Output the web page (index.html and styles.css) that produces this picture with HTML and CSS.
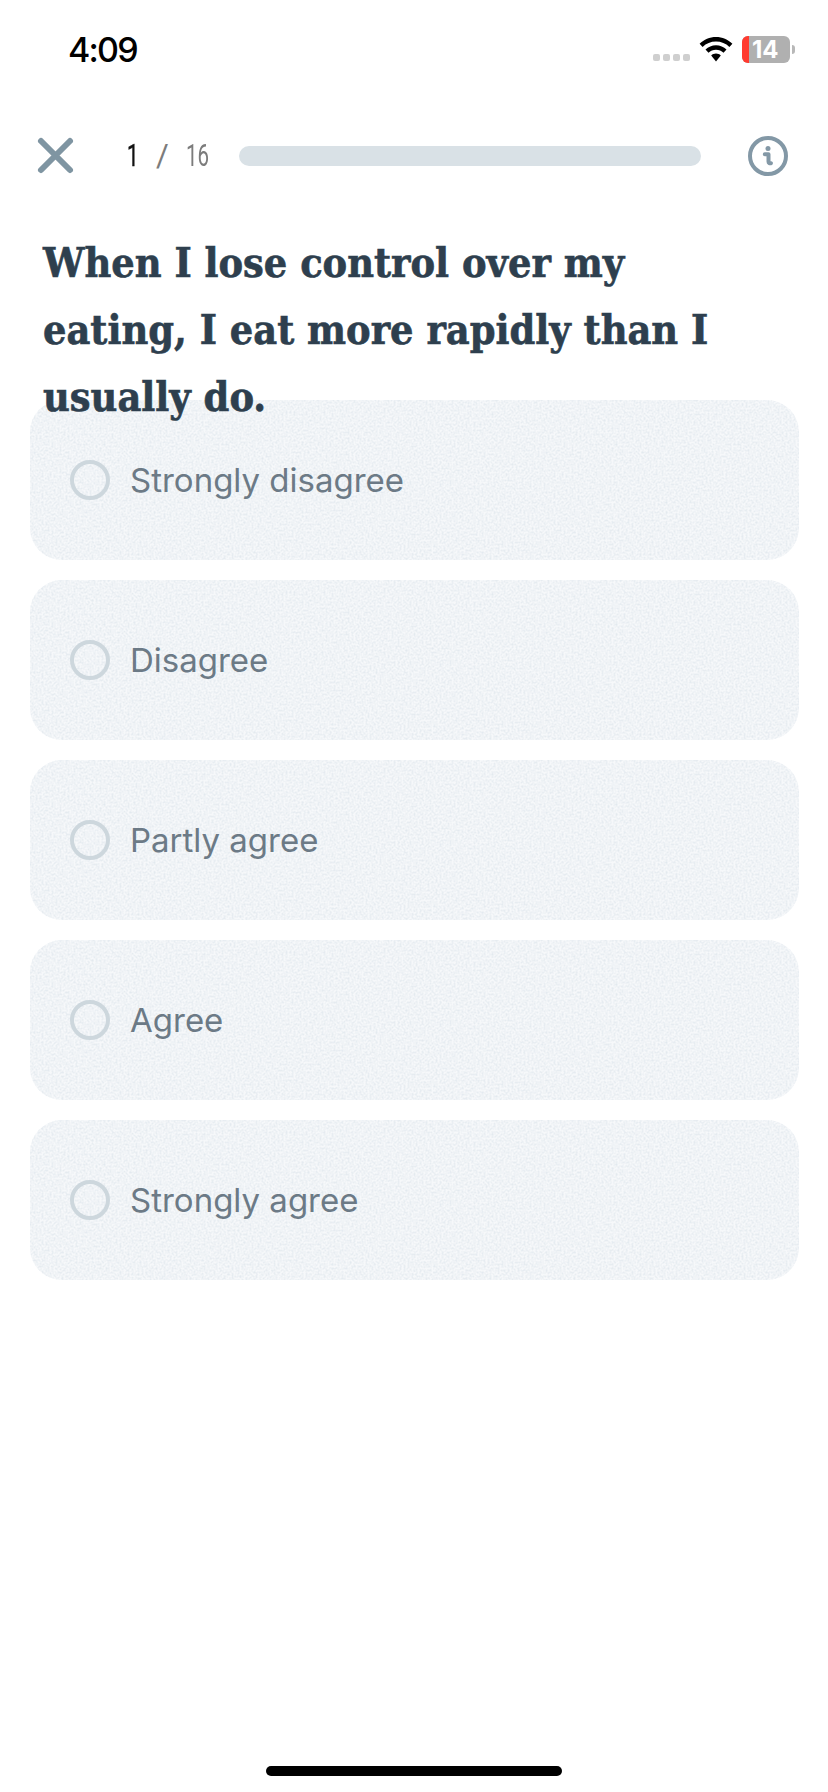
FILE: index.html
```html
<!DOCTYPE html>
<html lang="en">
<head>
<meta charset="utf-8">
<title>Question 1 of 16</title>
<link rel="stylesheet" href="styles.css">
</head>
<body>
<svg class="defs" width="0" height="0" aria-hidden="true">
  <filter id="grain" x="0" y="0" width="100%" height="100%" color-interpolation-filters="sRGB">
    <feTurbulence type="fractalNoise" baseFrequency="0.5" numOctaves="2" seed="4" result="n"/>
    <feColorMatrix in="n" type="matrix" values="0 0 0 0 0.87  0 0 0 0 0.90  0 0 0 0 0.925  1.7 0 0 0 -0.62" result="c"/>
    <feComposite in="c" in2="SourceAlpha" operator="in"/>
  </filter>
</svg>
<div class="screen">
  <header class="status">
    <span class="time">4:09</span>
    <div class="status-icons">
      <div class="signal"><i></i><i></i><i></i><i></i></div>
      <svg class="wifi" width="34" height="25" viewBox="0 0 34 25">
        <path d="M17 0C10.600 0 5 2.500 0.600 6.700L3.600 9.900C7.200 6.500 11.800 4.500 17 4.500S26.800 6.500 30.400 9.900L33.400 6.700C29 2.500 23.400 0 17 0Z"/>
        <path d="M17 8.300C12.900 8.300 9.300 9.900 6.500 12.600L9.500 15.800C11.500 14 14.100 12.800 17 12.800S22.500 14 24.500 15.800L27.500 12.600C24.700 9.900 21.100 8.300 17 8.300Z"/>
        <path d="M17 16.500C15.100 16.500 13.500 17.200 12.200 18.400L17 24.500L21.800 18.400C20.500 17.200 18.900 16.500 17 16.500Z"/>
      </svg>
      <div class="battery">
        <div class="battery-body"><span class="battery-low"></span><span class="battery-num">14</span></div>
        <span class="battery-nub"></span>
      </div>
    </div>
  </header>

  <nav class="topbar">
    <svg class="close" width="41" height="40" viewBox="0 0 41 40">
      <path d="M6 5L35 34M35 5L6 34"/>
    </svg>
    <div class="counter"><span class="cur">1</span><span class="sep">/</span><span class="tot">16</span></div>
    <div class="progress"></div>
    <svg class="info" width="40" height="40" viewBox="0 0 40 40">
      <circle cx="20" cy="20" r="18"/>
      <circle class="dot" cx="20" cy="12.600" r="2.500"/>
      <path d="M16.800 18.300H20.500V25.500C20.500 27 21.500 27.500 23 27.200"/>
    </svg>
  </nav>

  <h1 class="question">When I lose control over my eating, I eat more rapidly than I usually do.</h1>

  <div class="options">
    <div class="option"><span class="radio"></span><span class="label">Strongly disagree</span></div>
    <div class="option"><span class="radio"></span><span class="label">Disagree</span></div>
    <div class="option"><span class="radio"></span><span class="label">Partly agree</span></div>
    <div class="option"><span class="radio"></span><span class="label">Agree</span></div>
    <div class="option"><span class="radio"></span><span class="label">Strongly agree</span></div>
  </div>

  <div class="home"></div>
</div>
</body>
</html>
```
FILE: styles.css
```css
* { box-sizing: border-box; }
html, body { margin: 0; padding: 0; background: #fff; }
.defs { display: block; height: 0; }
.screen {
  width: 828px;
  height: 1792px;
  display: flex;
  flex-direction: column;
  overflow: hidden;
  font-family: Inter, "Liberation Sans", sans-serif;
}

.status {
  height: 100px;
  flex: none;
  display: flex;
  justify-content: space-between;
  align-items: flex-start;
  padding: 30px 33px 0 68px;
}
.time { font-size: 34px; line-height: 40px; font-weight: 500; color: #000; letter-spacing: -1.8px; }
.status-icons { display: flex; align-items: flex-start; padding-top: 6px; }
.signal { display: flex; gap: 3px; margin-top: 18px; margin-right: 9px; }
.signal i { width: 7px; height: 7px; border-radius: 2px; background: #cfcfcf; }
.wifi { fill: #000; margin-top: 1px; margin-right: 9px; }
.battery { display: flex; align-items: center; }
.battery-body {
  width: 48px; height: 27px; border-radius: 6px; overflow: hidden;
  background: #b0b0b0; display: flex; align-items: center;
}
.battery-low { width: 7px; height: 100%; background: #ff3b30; flex: none; }
.battery-num { color: #fff; font-size: 24px; font-weight: 700; line-height: 27px; margin-left: 3px; }
.battery-nub { width: 3px; height: 9px; background: #b8b8b8; border-radius: 0 3px 3px 0; margin-left: 2px; }

.topbar {
  height: 56px;
  flex: none;
  margin-top: 28px;
  display: flex;
  align-items: center;
  padding-left: 35px;
  padding-right: 40px;
}
.close { flex: none; }
.close path { fill: none; stroke: #7f95a2; stroke-width: 6; stroke-linecap: round; }
.counter {
  width: 111px; margin-left: 52px; flex: none;
  display: flex; align-items: center;
  font-family: Roboto, sans-serif; font-weight: 400; font-size: 31px; line-height: 32px;
  color: #7c7c7c;
}
.cur, .tot { display: block; transform: scaleX(0.66); transform-origin: left center; }
.cur { color: #111; width: 29px; margin-left: -1px; -webkit-text-stroke: 0.5px #111; }
.sep { display: block; width: 30px; }
.progress { flex: 1; height: 20px; border-radius: 10px; background: #d9e1e6; margin-right: 47px; }
.info { flex: none; }
.info circle { fill: none; stroke: #8398a6; stroke-width: 4; }
.info .dot { fill: #8398a6; stroke: none; }
.info path { fill: none; stroke: #8398a6; stroke-width: 4; stroke-linecap: round; stroke-linejoin: round; }

.question {
  position: relative;
  z-index: 1;
  flex: none;
  height: 170px;
  margin: 0;
  margin-top: 46px;
  padding: 0 105px 0 43px;
  font-family: "DejaVu Serif Condensed", "DejaVu Serif", serif;
  font-weight: 700;
  font-size: 41px;
  line-height: 67px;
  color: #2e3f4e;
  -webkit-text-stroke: 0.6px #2e3f4e;
}

.options { display: flex; flex-direction: column; gap: 20px; padding: 0 29px 0 30px; }
.option {
  position: relative;
  height: 160px;
  border-radius: 32px;
  background: #f6f8fa;
  display: flex;
  align-items: center;
  padding-left: 40px;
  overflow: hidden;
}
.option::before {
  content: "";
  position: absolute;
  inset: 0;
  background: #000;
  filter: url(#grain);
}
.radio {
  position: relative;
  width: 40px; height: 40px; flex: none;
  border-radius: 50%;
  border: 4px solid #cdd7dd;
}
.label {
  position: relative;
  margin-left: 20px;
  font-size: 33px;
  line-height: 40px;
  color: #6c7a86;
}

.home {
  width: 296px; height: 10px; flex: none;
  border-radius: 5px; background: #000;
  margin: auto auto 16px;
}
```
